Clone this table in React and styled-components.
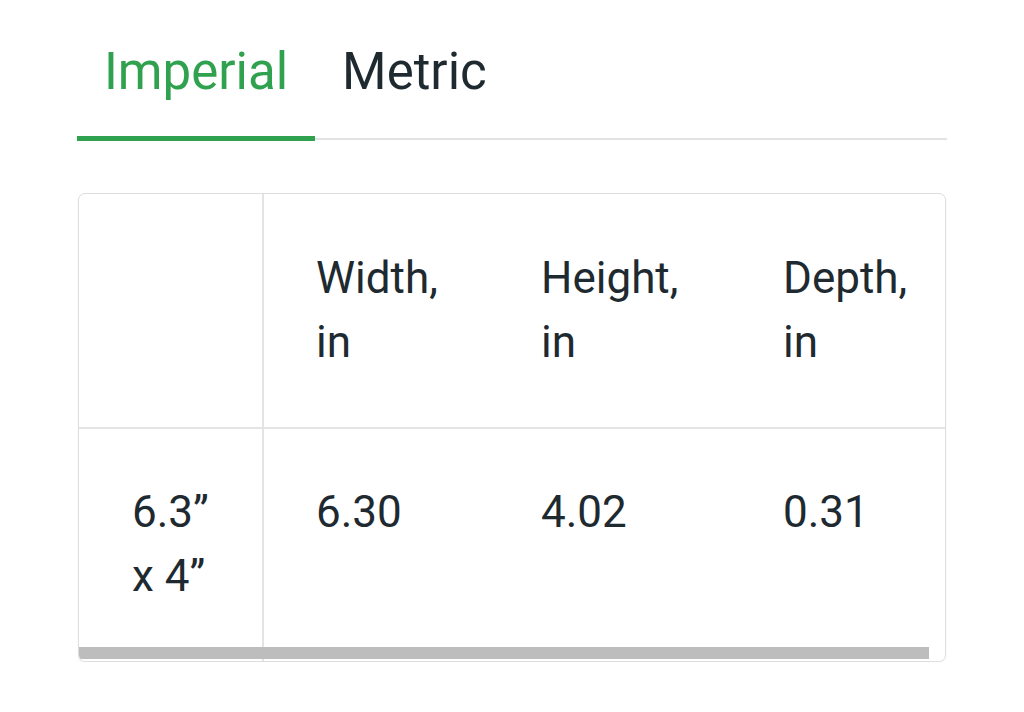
import styled, { createGlobalStyle } from "styled-components";

const GlobalStyle = createGlobalStyle`
  body {
    margin: 0;
    background: #ffffff;
    font-family: Roboto, "Liberation Sans", sans-serif;
    color: #1e2a30;
  }
`;

const tabs = ["Imperial", "Metric"];

const headers = [
  ["Width,", "in"],
  ["Height,", "in"],
  ["Depth,", "in"],
];

const rows = [
  { size: ["6.3”", "x 4”"], values: ["6.30", "4.02", "0.31"] },
];

export default function App() {
  return (
    <>
      <GlobalStyle />
      <Page>
        <TabBar>
          {tabs.map((t, i) => (
            <Tab key={t} $active={i === 0}>
              {t}
            </Tab>
          ))}
        </TabBar>

        <Card>
          <Table>
            <colgroup>
              <col style={{ width: 184 }} />
              <col style={{ width: 226 }} />
              <col style={{ width: 242 }} />
              <col style={{ width: 230 }} />
            </colgroup>
            <thead>
              <tr>
                <Th $first />
                {headers.map((h) => (
                  <Th key={h[0]}>
                    {h[0]}
                    <br />
                    {h[1]}
                  </Th>
                ))}
              </tr>
            </thead>
            <tbody>
              {rows.map((r) => (
                <tr key={r.size.join("")}>
                  <Td $first>
                    {r.size[0]}
                    <br />
                    {r.size[1]}
                  </Td>
                  {r.values.map((v, i) => (
                    <Td key={i}>{v}</Td>
                  ))}
                </tr>
              ))}
            </tbody>
          </Table>
          <ScrollThumb />
        </Card>
      </Page>
    </>
  );
}

const Page = styled.div`
  width: 870px;
  padding: 42px 0 0 77px;
`;

const TabBar = styled.div`
  display: flex;
  border-bottom: 2px solid #e2e2e2;
`;

const Tab = styled.div`
  padding: 0 27px 34px;
  margin-bottom: -3px;
  font-size: 51px;
  line-height: 60px;
  color: ${(p) => (p.$active ? "#30a24f" : "#1e2a30")};
  border-bottom: 5px solid ${(p) => (p.$active ? "#30a24f" : "transparent")};
`;

const Card = styled.div`
  position: relative;
  margin: 53px 0 0 1px;
  width: 866px;
  border: 1px solid #dedede;
  border-radius: 7px;
  box-shadow: 0 1px 2px rgba(0, 0, 0, 0.06);
  overflow: hidden;
`;

const Table = styled.table`
  width: 882px;
  table-layout: fixed;
  border-collapse: collapse;
`;

const Th = styled.th`
  text-align: left;
  vertical-align: top;
  font-weight: 400;
  font-size: 44px;
  line-height: 64px;
  padding: 52px 0 53px 52px;
  height: 128px;
  border-bottom: 2px solid #e4e4e4;
  border-right: ${(p) => (p.$first ? "2px solid #e4e4e4" : "none")};
`;

const Td = styled.td`
  vertical-align: top;
  font-size: 44px;
  line-height: 64px;
  padding: 51px 0 53px ${(p) => (p.$first ? "53px" : "52px")};
  border-right: ${(p) => (p.$first ? "2px solid #e4e4e4" : "none")};
`;

const ScrollThumb = styled.div`
  position: absolute;
  left: 0;
  bottom: 2px;
  width: 850px;
  height: 12px;
  background: #bdbdbd;
`;
